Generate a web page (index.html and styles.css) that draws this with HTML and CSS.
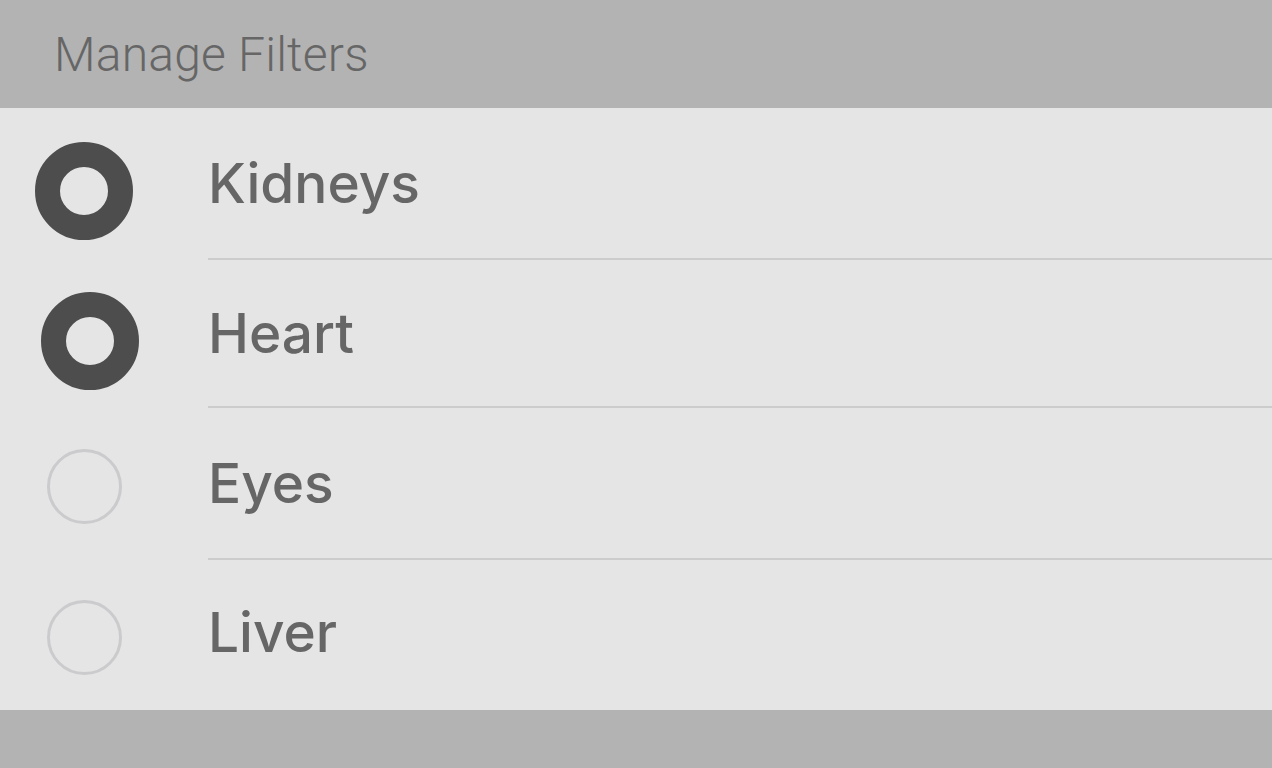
FILE: index.html
```html
<!DOCTYPE html>
<html lang="en">
<head>
    <meta charset="UTF-8">
    <meta name="viewport" content="width=device-width, initial-scale=1.0">
    <title>Manage Filters</title>
    <link rel="stylesheet" href="styles.css">
</head>
<body>
    <div class="screen">
        <header class="title-bar">
            <h1>Manage Filters</h1>
        </header>

        <ul class="filter-list">
            <li class="filter-row">
                <div class="radio-cell"><span class="radio checked"></span></div>
                <div class="label-cell">Kidneys</div>
            </li>
            <li class="filter-row short">
                <div class="radio-cell"><span class="radio checked shifted"></span></div>
                <div class="label-cell">Heart</div>
            </li>
            <li class="filter-row">
                <div class="radio-cell"><span class="radio"></span></div>
                <div class="label-cell">Eyes</div>
            </li>
            <li class="filter-row last">
                <div class="radio-cell"><span class="radio"></span></div>
                <div class="label-cell">Liver</div>
            </li>
        </ul>

        <footer class="bottom-bar"></footer>
    </div>
</body>
</html>
```

FILE: styles.css
```css
html, body {
    margin: 0;
    padding: 0;
    height: 100%;
}

body {
    background-color: #b3b3b3;
    font-family: "Liberation Sans", Arial, sans-serif;
}

.screen {
    display: flex;
    flex-direction: column;
    height: 100%;
}

.title-bar {
    height: 108px;
    flex: none;
    display: flex;
    align-items: center;
    padding-left: 54px;
    background-color: #b3b3b3;
}

.title-bar h1 {
    margin: 0;
    font-family: Roboto, "Liberation Sans", sans-serif;
    font-weight: 300;
    font-size: 48px;
    color: #666666;
    letter-spacing: 0.2px;
}

.filter-list {
    list-style: none;
    margin: 0;
    padding: 0;
    background-color: #e5e5e5;
    flex: none;
}

.filter-row {
    display: flex;
}

.radio-cell {
    width: 168px;
    flex: none;
    display: flex;
    justify-content: center;
    align-items: center;
}

.radio {
    width: 75px;
    height: 75px;
    box-sizing: border-box;
    border: 3px solid #cbcbce;
    border-radius: 50%;
    margin-top: 4px;
}

.radio.checked {
    width: 98px;
    height: 98px;
    border: 25px solid #4d4d4d;
    margin-top: 13px;
}

.radio.shifted {
    margin-left: 12px;
}

.label-cell {
    flex: 1;
    margin-left: 40px;
    height: 150px;
    display: flex;
    align-items: center;
    border-bottom: 2px solid #cccccc;
    font-family: Inter, "Liberation Sans", sans-serif;
    font-weight: 500;
    font-size: 55px;
    color: #666666;
    letter-spacing: 0;
}

.filter-row.short .label-cell {
    height: 146px;
}

.filter-row.last .label-cell {
    border-bottom: none;
    height: 144px;
    padding-bottom: 6px;
}

.bottom-bar {
    flex: 1;
    background-color: #b3b3b3;
}
```
